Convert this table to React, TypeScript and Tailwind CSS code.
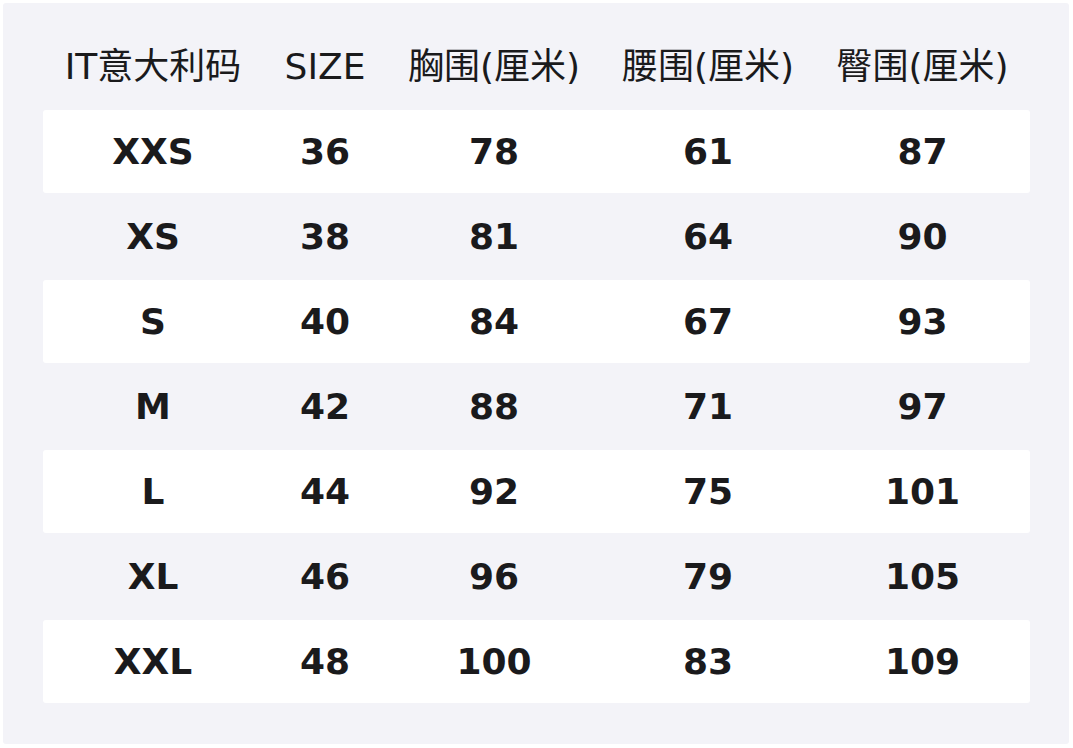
import React from 'react';

const headers = ['IT意大利码', 'SIZE', '胸围(厘米)', '腰围(厘米)', '臀围(厘米)'];

const rows = [
    ['XXS', '36', '78', '61', '87'],
    ['XS', '38', '81', '64', '90'],
    ['S', '40', '84', '67', '93'],
    ['M', '42', '88', '71', '97'],
    ['L', '44', '92', '75', '101'],
    ['XL', '46', '96', '79', '105'],
    ['XXL', '48', '100', '83', '109'],
];

const cols = 'grid grid-cols-[220px_124px_214px_214px_215px]';

export default function App() {
    return (
        <div className="w-[1073px] h-[748px] bg-white pt-[3px] pl-[3px] font-['DejaVu_Sans','Noto_Sans_CJK_SC',sans-serif] text-[#1a1a1c]">
            <div className="w-[1066px] h-[741px] rounded-[3px] bg-[#f3f3f8] pl-10 pt-[36px]">
                <div className={`${cols} h-[56px] items-center text-[36px] leading-none`}>
                    {headers.map((h) => (
                        <div key={h} className="text-center whitespace-nowrap">{h}</div>
                    ))}
                </div>
                <div className="mt-[15px] w-[987px]">
                    {rows.map((r, i) => (
                        <div
                            key={r[0]}
                            className={`${cols} items-center rounded-[3px] text-[36px] font-bold leading-none ${i % 2 === 0 ? 'h-[83px] bg-white' : 'h-[87px]'}`}
                        >
                            {r.map((c, j) => (
                                <div key={j} className="text-center">{c}</div>
                            ))}
                        </div>
                    ))}
                </div>
            </div>
        </div>
    );
}
